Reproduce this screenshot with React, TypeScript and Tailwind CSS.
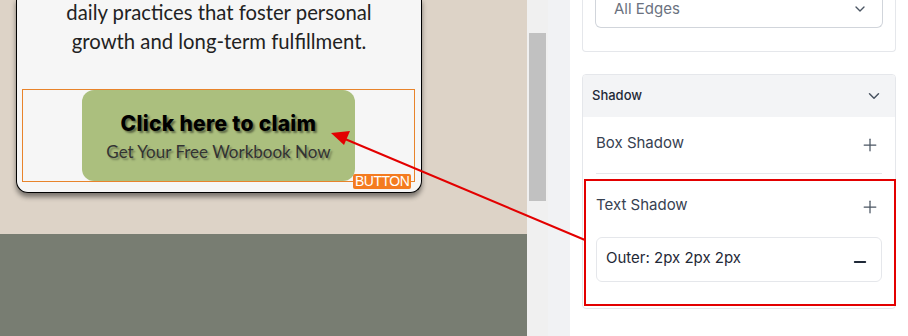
import { ChevronDown, Plus, Minus } from "lucide-react";

function Canvas() {
  return (
    <div className="flex flex-col w-[527px] h-full">
      <div className="h-[234px] bg-[#ddd3c7] pl-[16px]">
        <div className="relative w-[406px] h-[195px] bg-[#f6f6f6] border-x-[1.5px] border-b-[1.5px] border-black rounded-b-[12px] shadow-[0_4px_5px_rgba(0,0,0,0.45)]">
          <p className="mt-[-2px] text-center text-[20.3px] leading-[29px] text-[#222] font-['Lato',sans-serif]">
            daily practices that foster personal
            <br />
            growth and long-term fulfillment.
          </p>
          <div className="absolute left-[5px] top-[91px] w-[393px] h-[93px] border border-[#e8832a]" />
          <div className="absolute left-[65px] top-[92px] w-[273px] h-[91px] rounded-[12px] bg-[#abbf7e] flex flex-col items-center pt-[21px]">
            <span className="text-[21px] leading-[26px] tracking-[0.3px] font-extrabold text-black font-['Inter',sans-serif] [text-shadow:2px_2px_2px_rgba(0,0,0,0.45)]">
              Click here to claim
            </span>
            <span className="mt-[4px] text-[17px] leading-[22px] text-[#333] font-['Lato',sans-serif] [text-shadow:2px_2px_2px_rgba(0,0,0,0.35)]">
              Get Your Free Workbook Now
            </span>
          </div>
          <div className="absolute left-[336px] top-[176px] h-[15px] px-[2px] bg-[#f47b20] rounded-[2px] text-white text-[14px] leading-[15px] tracking-[-0.5px] font-['Liberation_Sans',sans-serif]">
            BUTTON
          </div>
        </div>
      </div>
      <div className="flex-1 bg-[#787d72]" />
    </div>
  );
}

function Scrollbar() {
  return (
    <div className="w-[21px] h-full bg-[#f0f0f0] pt-[33px] pl-[2px]">
      <div className="w-[17px] h-[168px] bg-[#c1c1c1]" />
    </div>
  );
}

function Panel() {
  return (
    <div className="flex-1 h-full bg-white px-[12px] font-['Inter',sans-serif]">
      <div className="h-[52px] border-x border-b border-[#e5e7eb] rounded-b-[4px] px-[12px]">
        <div className="h-[28px] border-x border-b border-[#d1d5db] rounded-b-[6px] flex items-end justify-between pb-[9px] pl-[18px] pr-[14px]">
          <span className="text-[15px] leading-[18px] text-[#6b7280]">All Edges</span>
          <ChevronDown size={16} strokeWidth={2} className="text-[#4b5563] mb-[1px]" />
        </div>
      </div>
      <div className="mt-[22px] h-[235px] border border-[#e5e7eb] rounded-[4px] overflow-hidden">
        <div className="h-[42px] bg-[#f3f4f6] flex items-center justify-between pl-[9px] pr-[12px]">
          <span className="text-[13px] font-medium text-[#1f2937]">Shadow</span>
          <ChevronDown size={18} strokeWidth={2} className="text-[#4b5563]" />
        </div>
        <div className="px-[13px]">
          <div className="h-[57px] border-b border-[#e5e7eb] flex items-center justify-between pr-[2px] pb-[4px]">
            <span className="text-[15px] text-[#374151]">Box Shadow</span>
            <Plus size={20} strokeWidth={1.5} className="text-[#4b5563] mt-[4px]" />
          </div>
          <div className="pt-[19px] flex items-center justify-between pr-[2px]">
            <span className="text-[15px] leading-[20px] text-[#374151]">Text Shadow</span>
            <Plus size={20} strokeWidth={1.5} className="text-[#4b5563] mt-[4px]" />
          </div>
          <div className="mt-[20px] h-[45px] border border-[#e5e7eb] rounded-[6px] flex items-center justify-between pl-[9px] pr-[12px]">
            <span className="text-[15px] text-[#1f2937] mb-[3px]">Outer: 2px 2px 2px</span>
            <Minus size={18} strokeWidth={2.5} className="text-[#1f2937] mt-[4px]" />
          </div>
        </div>
      </div>
    </div>
  );
}

export default function App() {
  return (
    <div className="relative flex w-[908px] h-[336px] overflow-hidden">
      <Canvas />
      <Scrollbar />
      <div className="w-[22px] h-full bg-[#f1f2f4]" />
      <Panel />
      {/* annotation overlay */}
      <div className="absolute left-[584px] top-[179px] w-[312px] h-[127px] border-2 border-[#e30000]" />
      <svg className="absolute inset-0 pointer-events-none" width="908" height="336">
        <line x1="585" y1="240" x2="345" y2="139" stroke="#e30000" strokeWidth="2" />
        <polygon points="331,133 350,131 344,145" fill="#e30000" />
      </svg>
    </div>
  );
}
